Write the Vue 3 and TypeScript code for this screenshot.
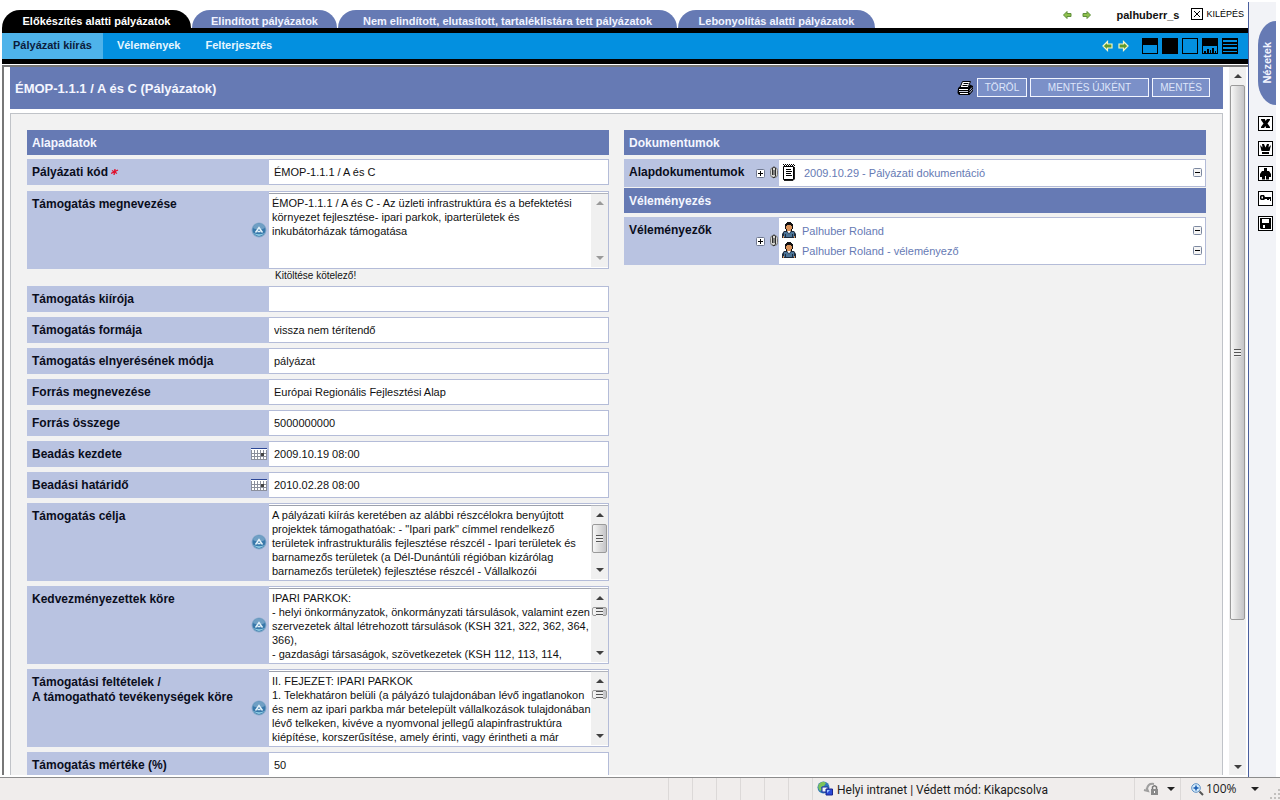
<script setup lang="ts">
interface Field {
  id: string
  label: string
  kind: 'text' | 'area'
  value: string
  required?: boolean
  calendar?: boolean
  hint?: string
  scroll?: 'off' | 'long' | 'short'
}

const tabs = [
  'Előkészítés alatti pályázatok',
  'Elindított pályázatok',
  'Nem elindított, elutasított, tartaléklistára tett pályázatok',
  'Lebonyolítás alatti pályázatok',
]
const subTabs = ['Pályázati kiírás', 'Vélemények', 'Felterjesztés']

const fields: Field[] = [
  { id: 'kod', label: 'Pályázati kód', kind: 'text', value: 'ÉMOP-1.1.1 / A és C', required: true },
  {
    id: 'megnevezes',
    label: 'Támogatás megnevezése',
    kind: 'area',
    value: 'ÉMOP-1.1.1 / A és C - Az üzleti infrastruktúra és a befektetési\nkörnyezet fejlesztése- ipari parkok, iparterületek és\ninkubátorházak támogatása',
    hint: 'Kitöltése kötelező!',
    scroll: 'off',
  },
  { id: 'kiiro', label: 'Támogatás kiírója', kind: 'text', value: '' },
  { id: 'forma', label: 'Támogatás formája', kind: 'text', value: 'vissza nem térítendő' },
  { id: 'mod', label: 'Támogatás elnyerésének módja', kind: 'text', value: 'pályázat' },
  { id: 'forras', label: 'Forrás megnevezése', kind: 'text', value: 'Európai Regionális Fejlesztési Alap' },
  { id: 'osszeg', label: 'Forrás összege', kind: 'text', value: '5000000000' },
  { id: 'kezdet', label: 'Beadás kezdete', kind: 'text', value: '2009.10.19 08:00', calendar: true },
  { id: 'hatarido', label: 'Beadási határidő', kind: 'text', value: '2010.02.28 08:00', calendar: true },
  {
    id: 'cel',
    label: 'Támogatás célja',
    kind: 'area',
    value: 'A pályázati kiírás keretében az alábbi részcélokra benyújtott\nprojektek támogathatóak: - "Ipari park" címmel rendelkező\nterületek infrastrukturális fejlesztése részcél - Ipari területek és\nbarnamezős területek (a Dél-Dunántúli régióban kizárólag\nbarnamezős területek) fejlesztése részcél - Vállalkozói',
    scroll: 'long',
  },
  {
    id: 'kor',
    label: 'Kedvezményezettek köre',
    kind: 'area',
    value: 'IPARI PARKOK:\n- helyi önkormányzatok, önkormányzati társulások, valamint ezen\nszervezetek által létrehozott társulások (KSH 321, 322, 362, 364,\n366),\n- gazdasági társaságok, szövetkezetek (KSH 112, 113, 114,',
    scroll: 'short',
  },
  {
    id: 'feltetelek',
    label: 'Támogatási feltételek /\nA támogatható tevékenységek köre',
    kind: 'area',
    value: 'II. FEJEZET: IPARI PARKOK\n1. Telekhatáron belüli (a pályázó tulajdonában lévő ingatlanokon\nés nem az ipari parkba már betelepült vállalkozások tulajdonában\nlévő telkeken, kivéve a nyomvonal jellegű alapinfrastruktúra\nkiépítése, korszerűsítése, amely érinti, vagy érintheti a már',
    scroll: 'short',
  },
  { id: 'mertek', label: 'Támogatás mértéke (%)', kind: 'text', value: '50' },
]

const reviewers = ['Palhuber Roland', 'Palhuber Roland - véleményező']
const sideTools = ['close', 'crown', 'person', 'key', 'disk']
const sideLabels = ['Bezárás', 'Korona', 'Személy', 'Kulcs', 'Mentés']
const layouts = ['half', 'full', 'empty', 'chart', 'lines']
</script>

<template>
  <div class="page">
    <div class="upper">
      <main class="main">
        <header class="top">
          <nav class="tabs">
            <a v-for="(t, i) in tabs" :key="t" href="#" class="tab" :class="{ on: i === 0 }">{{ t }}</a>
          </nav>
          <div class="user">
            <svg class="mini" width="9" height="8" viewBox="0 0 9 8"><path d="M0.5 4 4 0.5V2.5H8V5.5H4V7.5Z" fill="#8fc04c" stroke="#5f8f3c" /></svg>
            <svg class="mini second" width="9" height="8" viewBox="0 0 9 8"><path d="M8.500 4 5 0.500V2.500H1V5.500H5V7.500Z" fill="#8fc04c" stroke="#5f8f3c" /></svg>
            <strong class="name">palhuberr_s</strong>
            <a href="#" class="logout">
              <svg width="12" height="12" viewBox="0 0 12 12"><rect x=".5" y=".5" width="11" height="11" fill="#fff" stroke="#000" /><path d="M3 3l6 6M9 3l-6 6" stroke="#000" /></svg>
              KILÉPÉS
            </a>
          </div>
        </header>

        <div class="bar">
          <nav class="subs">
            <a v-for="(s, i) in subTabs" :key="s" href="#" class="sub" :class="{ on: i === 0 }">{{ s }}</a>
          </nav>
          <div class="tools">
            <svg width="11" height="12" viewBox="0 0 11 12"><path d="M1 6 5.500 1.500V4H10V8H5.500V10.500Z" fill="#5f9a2c" stroke="#f4f7c8" stroke-width="1.200" /></svg>
            <svg class="fwd" width="11" height="12" viewBox="0 0 11 12"><path d="M10 6 5.500 1.500V4H1V8H5.500V10.500Z" fill="#5f9a2c" stroke="#f4f7c8" stroke-width="1.200" /></svg>
            <svg v-for="l in layouts" :key="l" class="lay" width="16" height="16" viewBox="0 0 16 16">
              <rect x=".5" y=".5" width="15" height="15" fill="none" stroke="#000" />
              <path v-if="l === 'half'" d="M0 0H16V7H0Z" />
              <path v-if="l === 'full'" d="M0 0H16V16H0Z" />
              <path v-if="l === 'chart'" d="M0 0H16V8H0ZM2 13H4V16H2ZM5 11H7V16H5ZM8 12H9V16H8ZM10 10H12V16H10ZM13 13H14V16H13Z" />
              <path v-if="l === 'lines'" d="M0 0H16V2H0ZM0 4H16V6H0ZM0 7H16V9H0ZM0 11H16V13H0ZM0 14H16V16H0Z" />
            </svg>
          </div>
        </div>

        <div class="frame">
          <div class="doc">
            <div class="title">
              <h1>ÉMOP-1.1.1 / A és C (Pályázatok)</h1>
              <svg width="17" height="16" viewBox="0 0 17 16">
                <path d="M5.500 1.500H13.500L11 7.500H3Z" fill="#fff" stroke="#000" />
                <path d="M6.500 3.500H11.500M5.500 5.500H10.500" stroke="#000" />
                <path d="M1 8 3.500 6V8H11L13 4.500 16 6V11L12.500 15H2L.500 13Z" fill="#000" />
                <path d="M2 9.500H11M3 13.500H11" stroke="#fff" />
                <path d="M2 11.500H11" stroke="#c8cede" />
                <path d="M12.500 13 15.500 9.500M12.500 10.500 15 7.500" stroke="#b8c2e0" />
              </svg>
              <button type="button" class="btn b1">TÖRÖL</button>
              <button type="button" class="btn b2">MENTÉS ÚJKÉNT</button>
              <button type="button" class="btn b3">MENTÉS</button>
            </div>

            <div class="panel">
              <section class="col">
                <h2>Alapadatok</h2>
                <template v-for="f in fields" :key="f.id">
                  <div class="row" :class="[f.kind, { req: f.required, hinted: f.hint }]">
                    <div class="cap">
                      <label :for="f.id">{{ f.label }}<svg v-if="f.required" class="star" width="8" height="6" viewBox="0 0 8 6"><path d="M0 4.500 7 1M1 1.500 6 4.500M4 0 3 6" stroke="#e0102c" stroke-width="1.300" /></svg></label>
                      <svg v-if="f.kind === 'area'" width="16" height="16" viewBox="0 0 16 16">
                        <circle cx="8" cy="8" r="7.500" fill="#86aacb" />
                        <circle cx="8" cy="8" r="6.500" fill="#3878aa" />
                        <path d="M2 6A6.200 6 0 0 1 14 6Q8 9 2 6Z" fill="#6f9fc4" />
                        <path d="M2.500 11Q8 17 13.500 11Q8 13.500 2.500 11Z" fill="#8ecde4" />
                        <path d="M4.500 10.500 8 5.500 11.500 10.500M6.500 9.500H9.500" fill="none" stroke="#e6f4fb" stroke-width="1.400" />
                      </svg>
                      <svg v-if="f.calendar" width="16" height="12" viewBox="0 0 16 12">
                        <path d="M0 0H16V12H0Z" fill="#fff" />
                        <path d="M0 5.500H16M0 8.500H16M0 11.500H16M.5 2V12M3.500 2V12M6.500 2V12M9.500 2V12M12.500 2V12M15.500 2V12" stroke="#8b8f9c" />
                        <path d="M0 0H16V1H0Z" fill="#2c4796" /><path d="M10 5H13V8H10Z" fill="#444" />
                      </svg>
                    </div>
                    <input v-if="f.kind === 'text'" :id="f.id" type="text" :value="f.value" />
                    <div v-else class="areabox">
                      <textarea :id="f.id" :value="f.value" wrap="off" spellcheck="false"></textarea>
                      <div class="sb" :class="f.scroll">
                        <i class="up"></i>
                        <div class="thumb"><i></i></div>
                        <i class="down"></i>
                      </div>
                    </div>
                  </div>
                  <p v-if="f.hint" class="hint">{{ f.hint }}</p>
                </template>
              </section>

              <section class="col">
                <h2>Dokumentumok</h2>
                <div class="row docs">
                  <div class="cap narrow">
                    <span>Alapdokumentumok</span>
                    <svg class="plus" width="9" height="9" viewBox="0 0 9 9"><rect x=".5" y=".5" width="8" height="8" rx="1" fill="#fff" stroke="#6f7890" /><path d="M2 4.500H7M4.500 2V7" stroke="#000" /></svg>
                    <svg class="clip" width="8" height="15" viewBox="0 0 8 15"><rect x=".5" y="2.500" width="7" height="10" rx="3" fill="#d8d8d4" stroke="#777" /><path d="M2.500 10V3Q4 .500 5.500 3V11Q4 14.500 2.500 12M4 5V10" fill="none" stroke="#2c2c2c" /></svg>
                  </div>
                  <ul class="list">
                    <li class="doc-item">
                      <svg width="14" height="17" viewBox="0 0 14 17"><path d="M1.500 2.500H11.500V15.500H1.500Z" fill="#fff" stroke="#000" /><path d="M2 16.500H11L12.500 15V3" fill="none" stroke="#222" /><path d="M1 .500H13M2 1.500H13" stroke="#000" stroke-dasharray="1 1" /><path d="M4 5.500H9M4 7.500H10M4 9.500H9M4 11.500H10" stroke="#000" /></svg>
                      <a href="#">2009.10.29 - Pályázati dokumentáció</a>
                      <svg class="minus" width="9" height="9" viewBox="0 0 9 9"><rect x=".5" y=".5" width="8" height="8" rx="1" fill="#f4f4f4" stroke="#7c88a0" /><path d="M2 4.500H7" stroke="#000" /></svg>
                    </li>
                  </ul>
                </div>
                <h2>Véleményezés</h2>
                <div class="row revs">
                  <div class="cap narrow">
                    <span>Véleményezők</span>
                    <svg class="plus" width="9" height="9" viewBox="0 0 9 9"><rect x=".5" y=".5" width="8" height="8" rx="1" fill="#fff" stroke="#6f7890" /><path d="M2 4.500H7M4.500 2V7" stroke="#000" /></svg>
                    <svg class="clip" width="8" height="15" viewBox="0 0 8 15"><rect x=".5" y="2.500" width="7" height="10" rx="3" fill="#d8d8d4" stroke="#777" /><path d="M2.500 10V3Q4 .500 5.500 3V11Q4 14.500 2.500 12M4 5V10" fill="none" stroke="#2c2c2c" /></svg>
                  </div>
                  <ul class="list">
                    <li v-for="r in reviewers" :key="r">
                      <svg width="14" height="16" viewBox="0 0 14 16">
                        <path d="M5 0H9V1H10V2H11V7H10V9H4V7H3V2H4V1H5Z" fill="#111" />
                        <path d="M5 3H9V4H10V7H9V9H5V7H4V4H5Z" fill="#d9925a" />
                        <path d="M2 9H5L7 11 9 9H12L14 12V16H0V12Z" fill="#1e2c3e" />
                        <path d="M2 10H5L7 12.500 9 10H12V15H2Z" fill="#4b7396" />
                        <path d="M6 9H8L7 12Z" fill="#fff" /><path d="M3.500 12V16M10.500 12V16" stroke="#1e2c3e" /><path d="M1 14H2V16H1ZM12 14H13V16H12Z" fill="#d9925a" />
                      </svg>
                      <a href="#">{{ r }}</a>
                      <svg class="minus" width="9" height="9" viewBox="0 0 9 9"><rect x=".5" y=".5" width="8" height="8" rx="1" fill="#f4f4f4" stroke="#7c88a0" /><path d="M2 4.500H7" stroke="#000" /></svg>
                    </li>
                  </ul>
                </div>
              </section>
            </div>
          </div>
          <div class="sb page-sb">
            <i class="up"></i>
            <div class="thumb"><i></i></div>
            <i class="down"></i>
          </div>
        </div>
      </main>

      <aside class="side">
        <button type="button" class="views"><span>Nézetek</span></button>
        <button v-for="(s, i) in sideTools" :key="s" type="button" class="tool" :aria-label="sideLabels[i]">
          <svg width="15" height="15" viewBox="0 0 15 15">
            <rect x=".5" y=".5" width="14" height="14" fill="#fff" stroke="#000" />
            <path v-if="s === 'close'" d="M3 3H7L7.500 5 9 3H12V4L9.500 7.500 12 11V12H8L7.500 10 6 12H3V11L5.500 7.500 3 4Z" />
            <path v-if="s === 'crown'" d="M2 4 4.500 6.500 4 3H6L7.500 6.500 9 3H11L10.500 6.500 13 4 11.500 10H3.500ZM4 11H11V13H4Z" />
            <path v-if="s === 'person'" d="M6 2H9V5H11L13 8V11H11V13.500H8V10H7V13.500H4V11H2V8L4 5H6Z" />
            <path v-if="s === 'key'" fill-rule="evenodd" d="M3 4H6L7 6H13V10H12V8H11V9H9V8H7L6 9H3L2 8V5ZM3.500 5.500V7.500H5V5.500Z" />
            <path v-if="s === 'disk'" fill-rule="evenodd" d="M2 2H13V13H3L2 12ZM4 3V7H11V3ZM5 9V12H7V9Z" />
          </svg>
        </button>
      </aside>
    </div>

    <footer class="status">
      <div class="cells"><i v-for="n in 6" :key="n"></i></div>
      <div class="zone">
        <svg width="16" height="16" viewBox="0 0 16 16"><circle cx="6.500" cy="6.500" r="6" fill="#2f79b8" /><path d="M2 3Q6-1 9 2L7 5 4 6 5 9 3 10Q0 7 2 3Z" fill="#7cc35a" /><path d="M5 6H11V11H5Z" fill="#eef6ff" stroke="#1c2f9c" /><path d="M9 8H15.500V14H9Z" fill="#2a49d8" stroke="#18258c" /><path d="M10 9H13L10 12Z" fill="#9cc4ff" /></svg>
        <span>Helyi intranet | Védett mód: Kikapcsolva</span>
      </div>
      <button type="button" class="lock" aria-label="Védelem">
        <svg width="16" height="14" viewBox="0 0 16 14"><path d="M1 8 5 9 3.500 5.500M4 7Q5 1 11 2" fill="none" stroke="#9f9f9f" stroke-width="2" /><rect x="8" y="7" width="7" height="6" fill="#8a8a8a" /><path d="M9.500 7V5Q11.500 2.500 13.500 5V7" fill="none" stroke="#777" stroke-width="1.500" /><path d="M11.500 9V11" stroke="#fff" /></svg>
        <i class="tri"></i>
      </button>
      <button type="button" class="zoom">
        <svg width="13" height="13" viewBox="0 0 13 13"><circle cx="5" cy="5" r="4.300" fill="#d6ecfb" stroke="#5c8fc4" /><path d="M5 2.500V7.500M2.500 5H7.500" stroke="#1558b0" stroke-width="1.500" /><path d="M8.500 8.500 12 12" stroke="#555" stroke-width="2" /></svg>
        <span>100%</span>
        <i class="tri"></i>
      </button>
      <svg class="grip" width="11" height="11" viewBox="0 0 11 11"><path d="M8 0H10V2H8ZM4 4H6V6H4ZM8 4H10V6H8ZM0 8H2V10H0ZM4 8H6V10H4ZM8 8H10V10H8Z" fill="#c2c0be" /></svg>
    </footer>
  </div>
</template>

<style>
body { background: #fff; overflow: hidden; }
</style>

<style scoped>
* { box-sizing: border-box; margin: 0; }
.page { display: flex; flex-direction: column; height: 100vh; font: 11px/14px "Liberation Sans", Arial, sans-serif; color: #111; }
a { color: inherit; text-decoration: none; }
button { padding: 0; border: 0; background: none; font: inherit; color: inherit; }
svg { flex: none; display: block; }
.upper { flex: 1; min-height: 0; display: flex; }
.main { flex: 1; min-width: 0; display: flex; flex-direction: column; padding-left: 2px; }

.top { display: flex; justify-content: space-between; height: 28px; flex: none; }
.tabs { display: flex; align-items: flex-end; gap: 1px; }
.tab { height: 18px; border-radius: 18px 18px 0 0; background: #667ab4; color: #f0f3ff; font-weight: bold; line-height: 22px; text-align: center; white-space: nowrap; }
.tab:nth-child(1) { width: 189px; }
.tab:nth-child(2) { width: 145px; }
.tab:nth-child(3) { width: 339px; }
.tab:nth-child(4) { width: 197px; }
.tab.on { background: #000; color: #fff; }
.user { display: flex; align-items: center; padding: 2px 4px 0 0; }
.mini.second { margin-left: 10px; }
.name { margin-left: 26px; }
.logout { display: flex; align-items: center; gap: 3px; margin-left: 12px; font-size: 9px; color: #000; padding-bottom: 2px; }

.bar { display: flex; justify-content: space-between; flex: none; height: 36px; border: solid #000; border-width: 5px 0; background: #0390e0; }
.subs { display: flex; }
.sub { padding: 0 11px; line-height: 25px; font-weight: bold; color: #e6f6ff; }
.sub:nth-child(2) { padding: 0 14px; }
.sub.on { background: #4eb3ea; color: #0b1c3c; }
.tools { display: flex; align-items: center; padding-right: 10px; }
.fwd { margin: 0 9px 0 5px; }
.lay { margin-left: 4px; }

.frame { flex: 1; min-height: 0; display: flex; margin: 1px 0 2px; border: solid #777; border-width: 2px 0 0 2px; overflow: hidden; }
.doc { flex: 1; min-width: 0; display: flex; flex-direction: column; margin: 0 6px; }
.title { display: flex; align-items: center; flex: none; height: 42px; padding: 0 13px 1px 5px; background: #667ab4; }
h1 { flex: 1; font-size: 13px; line-height: 16px; padding-top: 2px; color: #f4f6ff; }
.btn { height: 19px; margin-left: 3px; border: 1px solid #f2f5ff; background: #7b90c8; color: #dfe6fa; font-size: 10px; line-height: 17px; }
.b1 { width: 50px; }
.b2 { width: 119px; }
.b3 { width: 58px; }
.panel { flex: 1; min-height: 0; display: grid; grid-template-columns: 1fr 1fr; gap: 15px; margin-top: 4px; padding: 16px 16px 0; border: solid #c0c3c8; border-width: 1px 1px 0; background: #f2f2f2; overflow: hidden; }
.col { display: flex; flex-direction: column; min-width: 0; }
h2 { flex: none; height: 25px; margin-bottom: 4px; padding-left: 5px; background: #667ab4; color: #f4f6ff; font-size: 12px; line-height: 26px; }

.row { display: flex; flex: none; margin-bottom: 5px; }
.row.text { height: 26px; }
.row.area { height: 78px; }
.row.req { margin-bottom: 6px; }
.row.hinted { margin-bottom: 0; }
.cap { display: flex; align-items: center; flex: none; width: 242px; padding: 0 2px 0 5px; background: #b9c3e1; }
.cap label, .cap span { flex: 1; align-self: flex-start; padding-top: 6px; font-size: 12px; line-height: 15px; font-weight: bold; white-space: pre; color: #0a0d1c; }
.cap.narrow { width: 155px; padding-right: 1px; }
.cap.narrow .plus { margin-right: 5px; }
.clip { margin-bottom: 2px; }
.star { display: inline-block; margin-left: 3px; vertical-align: 1px; }
input, .areabox, .list { flex: 1; min-width: 0; border: solid #b4bcd8; border-width: 1px 1px 1px 0; background: #fff; }
input { padding: 0 5px; font: inherit; color: #111; border-radius: 0; outline: 0; }
.areabox { display: flex; padding: 1px 0; }
textarea { flex: 1; min-width: 0; padding: 2px 3px; border: 0; border-top: 1px solid #9da1ac; resize: none; overflow: hidden; font: inherit; color: #111; background: #fff; outline: 0; white-space: pre; }
.hint { flex: none; height: 17px; padding: 0 0 0 248px; font-size: 10px; line-height: 14px; }

.sb { flex: none; width: 17px; display: flex; flex-direction: column; align-items: center; padding: 7px 1px; border-top: 1px solid #b0b3bb; background: #f0f0f0; }
.up, .down { flex: none; border: solid transparent; border-width: 0 4px; }
.up { border-bottom: 4px solid #404040; }
.down { margin-top: auto; border-top: 4px solid #404040; }
.off .up { border-bottom-color: #9a9a9a; }
.off .down { border-top-color: #9a9a9a; }
.off .thumb { display: none; }
.thumb { display: flex; align-items: center; justify-content: center; flex: none; width: 15px; height: 29px; margin-top: 7px; border: 1px solid #9a9a9a; border-radius: 2px; background: linear-gradient(90deg, #f7f7f7, #dcdcdc 50%, #c4c4c8); }
.thumb i { width: 7px; height: 8px; background: repeating-linear-gradient(#555 0 1px, #eee 1px 3px); }
.short .thumb { height: 9px; }
.page-sb { border: 0; padding: 7px 1px 6px; margin-right: 2px; }
.page-sb .thumb { height: 535px; }

.row.docs { height: 28px; margin-bottom: 1px; }
.row.revs { height: 48px; }
.list { display: flex; flex-direction: column; list-style: none; padding: 2px 3px; color: #667ab4; }
.list li { display: flex; align-items: center; height: 20px; gap: 6px; }
.list a { flex: 1; padding-top: 2px; }
.list .doc-item { gap: 8px; }

.side { flex: none; width: 28px; margin: 2px 4px 0 0; padding: 19px 0 0 9px; display: flex; flex-direction: column; border-left: 1px solid #4a5f9e; background: #f2f3f7; }
.views { display: flex; align-items: center; justify-content: center; width: 18px; height: 84px; margin-bottom: 11px; border-radius: 18px 0 0 18px / 24px 0 0 24px; background: #667ab4; color: #f4f6ff; font-weight: bold; }
.views span { writing-mode: vertical-rl; transform: rotate(180deg); }
.tool { height: 15px; width: 15px; margin-bottom: 10px; }

.status { flex: none; display: flex; align-items: center; height: 23px; border-top: 1px solid #8c8c8c; background: #f0edec; font: 12px/16px "Open Sans", "Noto Sans", sans-serif; color: #1b1b1b; }
.cells { flex: 1; display: flex; justify-content: flex-end; align-self: stretch; }
.cells i { width: 24px; border-left: 1px solid #dcd9d8; }
.zone { flex: none; display: flex; align-items: center; align-self: stretch; gap: 4px; width: 322px; padding-left: 4px; border-left: 1px solid #dcd9d8; white-space: nowrap; }
.zone span { font-family: Roboto, "Open Sans", sans-serif; padding-top: 2px; }
.lock, .zoom { display: flex; align-items: center; align-self: stretch; border-left: 1px solid #dcd9d8; }
.lock { width: 46px; padding-left: 8px; gap: 8px; }
.zoom { width: 90px; padding-left: 10px; gap: 2px; }
.zoom .tri { margin-left: 12px; }
.tri { border: solid transparent; border-width: 4px 4px 0; border-top-color: #222; }
.grip { align-self: flex-end; margin-right: -1px; }
</style>
